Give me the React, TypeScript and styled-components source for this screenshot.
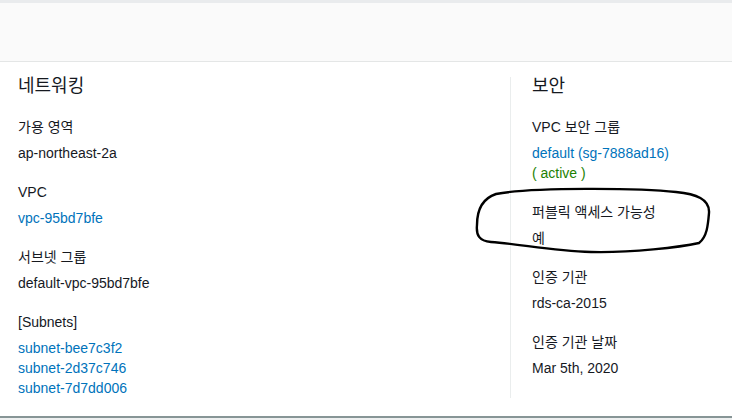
import React from "react";
import styled, { createGlobalStyle } from "styled-components";

type Tone = "text" | "link" | "ok";

type Field = {
  label: string;
  values: { text: string; tone: Tone }[];
};

const networking: Field[] = [
  { label: "가용 영역", values: [{ text: "ap-northeast-2a", tone: "text" }] },
  { label: "VPC", values: [{ text: "vpc-95bd7bfe", tone: "link" }] },
  { label: "서브넷 그룹", values: [{ text: "default-vpc-95bd7bfe", tone: "text" }] },
  {
    label: "[Subnets]",
    values: [
      { text: "subnet-bee7c3f2", tone: "link" },
      { text: "subnet-2d37c746", tone: "link" },
      { text: "subnet-7d7dd006", tone: "link" },
    ],
  },
];

const security: Field[] = [
  {
    label: "VPC 보안 그룹",
    values: [
      { text: "default (sg-7888ad16)", tone: "link" },
      { text: "( active )", tone: "ok" },
    ],
  },
  { label: "퍼블릭 액세스 가능성", values: [{ text: "예", tone: "text" }] },
  { label: "인증 기관", values: [{ text: "rds-ca-2015", tone: "text" }] },
  { label: "인증 기관 날짜", values: [{ text: "Mar 5th, 2020", tone: "text" }] },
];

const toneColor: Record<Tone, string> = {
  text: "#16191f",
  link: "#0073bb",
  ok: "#1d8102",
};

const FieldList = ({ fields }: { fields: Field[] }) => (
  <>
    {fields.map((field, i) => (
      <FieldBlock key={field.label} $first={i === 0}>
        <Label>{field.label}</Label>
        <Values>
          {field.values.map((v) => (
            <Value key={v.text} $tone={v.tone}>
              {v.text}
            </Value>
          ))}
        </Values>
      </FieldBlock>
    ))}
  </>
);

const App = () => {
  return (
    <Page>
      <GlobalStyle />
      <HeaderBar />
      <Body>
        <Column>
          <Heading>네트워킹</Heading>
          <FieldList fields={networking} />
        </Column>
        <SideColumn>
          <Heading>보안</Heading>
          <FieldList fields={security} />
          {/* 손으로 그린 강조 표시 */}
          <Scribble viewBox="0 0 245 75" width="245" height="75">
            <path
              d="M25 9 C60 2, 170 3, 205 7 C225 9, 239 14, 238 28 C237 40, 236 52, 228 58 C210 62, 160 68, 120 67 C80 66, 50 59, 20 57 C8 56, 5 50, 6 40 C6 28, 10 14, 25 9 Z"
              fill="none"
              stroke="#000"
              strokeWidth="2.4"
              strokeLinejoin="round"
              strokeLinecap="round"
            />
          </Scribble>
        </SideColumn>
      </Body>
      <Footer />
    </Page>
  );
};

export default App;

const GlobalStyle = createGlobalStyle`
  html, body {
    margin: 0;
    padding: 0;
    background: #ffffff;
  }
  body {
    font-family: "Liberation Sans", "Noto Sans CJK KR", sans-serif;
    color: #16191f;
  }
`;

const Page = styled.div`
  width: 732px;
  height: 420px;
  display: flex;
  flex-direction: column;
  overflow: hidden;
`;

const HeaderBar = styled.div`
  height: 58px;
  background: #fafafa;
  border-top: 3px solid #e9ebed;
  border-bottom: 1px solid #e4e6e6;
`;

const Body = styled.div`
  display: grid;
  grid-template-columns: 510px 1fr;
  padding: 15px 0 18px;
  background: #ffffff;
`;

const Column = styled.div`
  padding-left: 18px;
`;

const SideColumn = styled.div`
  position: relative;
  padding-left: 21px;
  border-left: 1px solid #eaeded;
`;

const Heading = styled.div`
  font-size: 18px;
  line-height: 18px;
  color: #16191f;
`;

const FieldBlock = styled.div<{ $first: boolean }>`
  margin-top: ${(p) => (p.$first ? "22px" : "19px")};
`;

const Label = styled.div`
  font-size: 14px;
  line-height: 20px;
  color: #16191f;
`;

const Values = styled.div`
  margin-top: 6px;
  display: flex;
  flex-direction: column;
`;

const Value = styled.div<{ $tone: Tone }>`
  font-size: 14px;
  line-height: 20px;
  color: ${(p) => toneColor[p.$tone]};
`;

const Scribble = styled.svg`
  position: absolute;
  left: -40px;
  top: 108px;
  pointer-events: none;
`;

const Footer = styled.div`
  flex: 1;
  background: #eef0f0;
  border-top: 2px solid #879596;
`;
